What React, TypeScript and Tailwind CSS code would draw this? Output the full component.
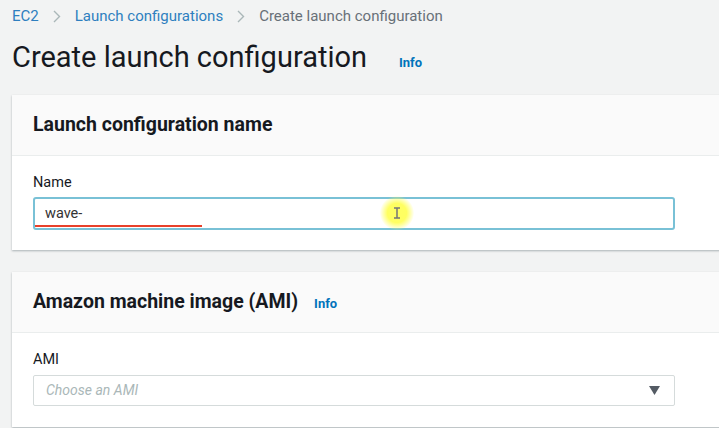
import React from "react";

export default function App() {
  const font = { fontFamily: "Roboto, 'Open Sans', sans-serif" };
  return (
    <div className="w-[719px] h-[428px] overflow-hidden bg-[#f2f3f3] text-[#16191f]" style={font}>
      <div className="pl-3 h-[32px] flex items-center gap-[14px] text-[15px]">
        <span className="text-[#2e7fbf]">EC2</span>
        <svg width="8" height="13" viewBox="0 0 8 13">
          <path d="M1 1l5.5 5.5L1 12" stroke="#aab7b8" strokeWidth="1.4" fill="none" />
        </svg>
        <span className="text-[#2e7fbf]">Launch configurations</span>
        <svg width="8" height="13" viewBox="0 0 8 13">
          <path d="M1 1l5.5 5.5L1 12" stroke="#aab7b8" strokeWidth="1.4" fill="none" />
        </svg>
        <span className="text-[#687078]">Create launch configuration</span>
      </div>
      <div className="pl-3 mt-[5px] flex items-baseline h-[40px]">
        <h1 className="text-[29px] leading-[40px] font-normal text-[#16191f]">Create launch configuration</h1>
        <span className="ml-[32px] text-[13px] font-bold text-[#0073bb]">Info</span>
      </div>
      <div className="ml-3 mt-[18px] w-[720px] bg-white shadow-[0_1px_2px_rgba(0,28,36,0.3)]">
        <div className="h-[61px] bg-[#fafafa] border-b border-[#eaeded] pl-[21px] flex items-center">
          <h2 className="text-[19.5px] font-bold">Launch configuration name</h2>
        </div>
        <div className="pl-[21px] pt-[18px] pb-[20px]">
          <div className="text-[14.5px] leading-[17px] mb-[6px]">Name</div>
          <div className="relative w-[642px] h-[33px] border-2 border-[#79c1d6] rounded-[3px] flex items-center pl-[10px] text-[14.5px] text-[#333]">
            wave-
            <div className="absolute left-[0px] top-[26px] w-[167px] h-[2px] bg-[#e8402a]" />
            <div className="absolute left-[345px] top-[-3px] w-[34px] h-[34px] rounded-full bg-[radial-gradient(circle,rgba(255,255,80,0.9)_40%,rgba(255,255,120,0)_72%)] flex items-center justify-center">
              <svg width="8" height="12" viewBox="0 0 8 12">
                <path d="M1 1h6M4 1v10M1 11h6" stroke="#777" strokeWidth="1.5" fill="none" />
              </svg>
            </div>
          </div>
        </div>
      </div>
      <div className="ml-3 mt-[22px] w-[720px] bg-white shadow-[0_1px_2px_rgba(0,28,36,0.3)]">
        <div className="h-[61px] bg-[#fafafa] border-b border-[#eaeded] pl-[21px] flex items-center">
          <h2 className="text-[19.5px] font-bold">Amazon machine image (AMI)</h2>
          <span className="ml-[16px] text-[13px] font-bold text-[#0073bb] mt-[3px]">Info</span>
        </div>
        <div className="pl-[21px] pt-[18px] pb-[21px]">
          <div className="text-[14.5px] leading-[17px] mb-[7px]">AMI</div>
          <div className="w-[642px] h-[31px] border border-[#d5dbdb] rounded-[2px] flex items-center justify-between pl-[12px] pr-[14px] text-[14px] italic text-[#aab7b8]">
            <span>Choose an AMI</span>
            <svg width="11" height="9" viewBox="0 0 11 9">
              <path d="M0 0h11L5.5 9z" fill="#545b64" />
            </svg>
          </div>
        </div>
      </div>
    </div>
  );
}
